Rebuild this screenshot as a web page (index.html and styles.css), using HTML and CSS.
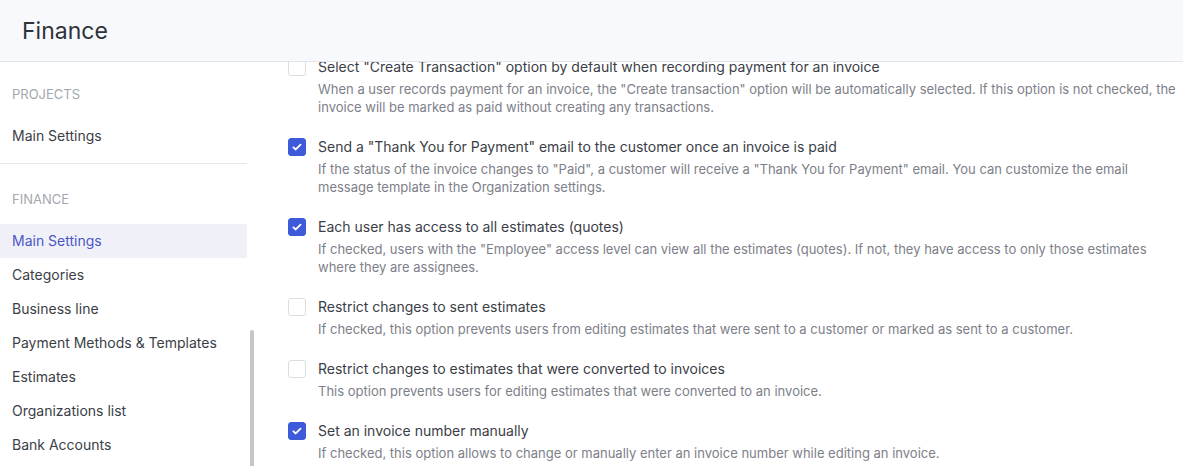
FILE: index.html
```html
<!DOCTYPE html>
<html lang="en">
<head>
  <meta charset="UTF-8">
  <meta name="viewport" content="width=device-width, initial-scale=1">
  <title>Finance</title>
  <link rel="stylesheet" href="styles.css">
</head>
<body>

  <header class="top-bar">
    <h1>Finance</h1>
  </header>

  <div class="layout">
    <nav class="sidebar">
      <div class="nav-group">
        <div class="nav-label">Projects</div>
        <a class="nav-item">Main Settings</a>
      </div>
      <div class="nav-group">
        <div class="nav-label">Finance</div>
        <a class="nav-item active">Main Settings</a>
        <a class="nav-item">Categories</a>
        <a class="nav-item">Business line</a>
        <a class="nav-item">Payment Methods &amp; Templates</a>
        <a class="nav-item">Estimates</a>
        <a class="nav-item">Organizations list</a>
        <a class="nav-item">Bank Accounts</a>
      </div>
      <div class="scroll-thumb"></div>
    </nav>

    <main class="content">
      <div class="options">
        <div class="option">
          <span class="check"></span>
          <div class="option-text">
            <div class="option-title">Select "Create Transaction" option by default when recording payment for an invoice</div>
            <div class="option-desc">When a user records payment for an invoice, the "Create transaction" option will be automatically selected. If this option is not checked, the invoice will be marked as paid without creating any transactions.</div>
          </div>
        </div>

        <div class="option">
          <span class="check on"><svg viewBox="0 0 18 18"><path d="M5 9.3l2.6 2.5L13 6.4"/></svg></span>
          <div class="option-text">
            <div class="option-title">Send a "Thank You for Payment" email to the customer once an invoice is paid</div>
            <div class="option-desc">If the status of the invoice changes to "Paid", a customer will receive a "Thank You for Payment" email. You can customize the email message template in the Organization settings.</div>
          </div>
        </div>

        <div class="option">
          <span class="check on"><svg viewBox="0 0 18 18"><path d="M5 9.3l2.6 2.5L13 6.4"/></svg></span>
          <div class="option-text">
            <div class="option-title">Each user has access to all estimates (quotes)</div>
            <div class="option-desc">If checked, users with the "Employee" access level can view all the estimates (quotes). If not, they have access to only those estimates where they are assignees.</div>
          </div>
        </div>

        <div class="option">
          <span class="check"></span>
          <div class="option-text">
            <div class="option-title">Restrict changes to sent estimates</div>
            <div class="option-desc">If checked, this option prevents users from editing estimates that were sent to a customer or marked as sent to a customer.</div>
          </div>
        </div>

        <div class="option">
          <span class="check"></span>
          <div class="option-text">
            <div class="option-title">Restrict changes to estimates that were converted to invoices</div>
            <div class="option-desc">This option prevents users for editing estimates that were converted to an invoice.</div>
          </div>
        </div>

        <div class="option">
          <span class="check on"><svg viewBox="0 0 18 18"><path d="M5 9.3l2.6 2.5L13 6.4"/></svg></span>
          <div class="option-text">
            <div class="option-title">Set an invoice number manually</div>
            <div class="option-desc">If checked, this option allows to change or manually enter an invoice number while editing an invoice.</div>
          </div>
        </div>
      </div>
    </main>
  </div>

</body>
</html>
```

FILE: styles.css
```css
* {
  box-sizing: border-box;
}

html, body {
  height: 100%;
}

body {
  margin: 0;
  font-family: Inter, 'Noto Sans', sans-serif;
  color: #3b3e46;
  background: #fff;
  overflow: hidden;
}

.top-bar {
  height: 62px;
  background: #f8f9fc;
  border-bottom: 1px solid #e3e4ec;
  display: flex;
  align-items: center;
  padding: 0 22px;
  position: relative;
  z-index: 2;
}

.top-bar h1 {
  margin: 0;
  font-size: 23px;
  font-weight: 400;
  color: #2f323a;
}

.layout {
  display: flex;
  height: calc(100% - 62px);
}

/* sidebar */

.sidebar {
  width: 256px;
  flex-shrink: 0;
  position: relative;
  padding-right: 9px;
}

.nav-group {
  padding-top: 22px;
}

.nav-group + .nav-group {
  border-top: 1px solid #e6e7eb;
  margin-top: 10px;
  padding-top: 25px;
}

.nav-label {
  font-size: 13px;
  text-transform: uppercase;
  color: #a3a7b0;
  padding: 0 12px;
  line-height: 20px;
  margin-bottom: 15px;
}

.nav-item {
  display: block;
  font-size: 14px;
  line-height: 34px;
  padding: 0 12px;
  color: #3b3e46;
  cursor: pointer;
}

.nav-item.active {
  background: #f0f1f8;
  color: #4b56c9;
}

.scroll-thumb {
  position: absolute;
  left: 250px;
  top: 268px;
  width: 4px;
  bottom: 0;
  background: #c6c6c6;
  border-radius: 2px 2px 0 0;
}

/* content */

.content {
  flex: 1;
  overflow: hidden;
  padding: 0 6px 0 32px;
}

.options {
  margin-top: -5px;
}

.option {
  display: flex;
  gap: 12px;
  margin-bottom: 21px;
}

.check {
  width: 18px;
  height: 18px;
  flex-shrink: 0;
  margin-top: 1px;
  border: 1px solid #dcdde2;
  border-radius: 3px;
  background: #fff;
}

.check.on {
  background: #3d5bd9;
  border-color: #3d5bd9;
}

.check svg {
  display: block;
  width: 16px;
  height: 16px;
  fill: none;
  stroke: #fff;
  stroke-width: 2;
  stroke-linecap: round;
  stroke-linejoin: round;
}

.option-title {
  font-size: 14px;
  line-height: 20px;
  color: #3b3e46;
  margin-bottom: 3px;
}

.option-desc {
  font-size: 13px;
  line-height: 18px;
  color: #7d8089;
}
```
